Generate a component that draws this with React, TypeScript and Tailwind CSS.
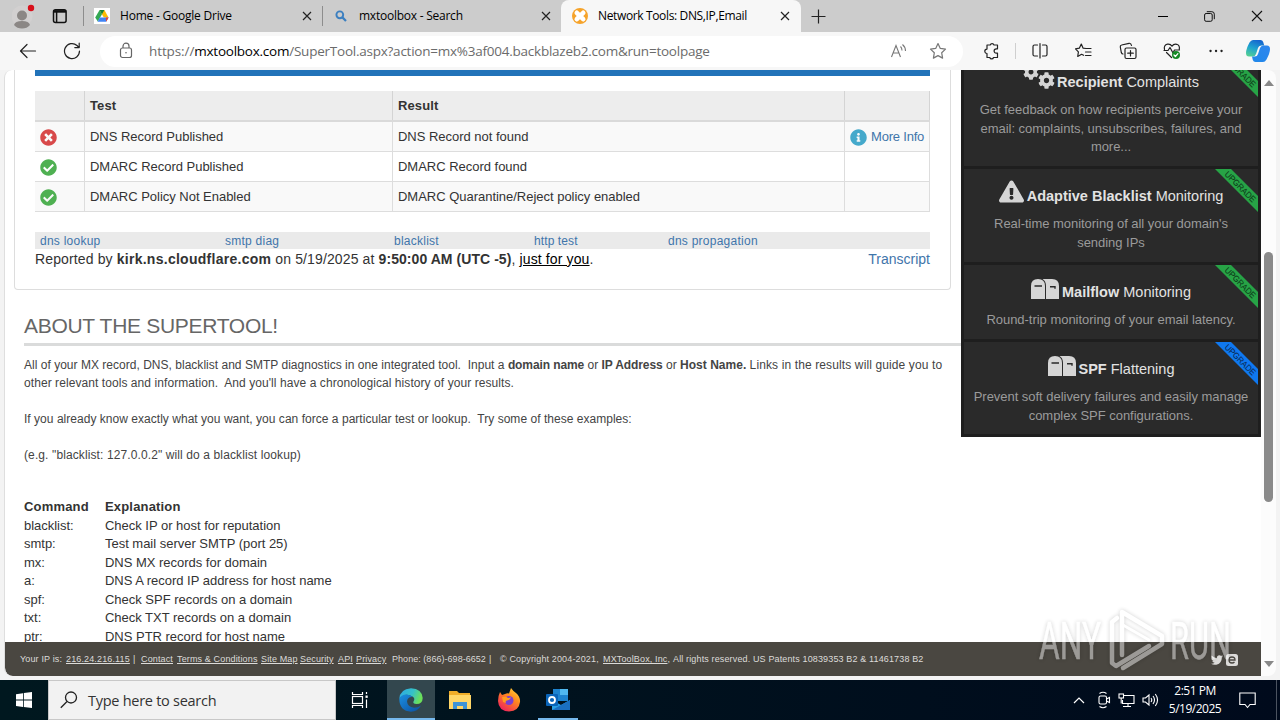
import type { ReactNode } from "react";
import { FaCheckCircle, FaCog, FaExclamationTriangle, FaInfoCircle, FaTimesCircle, FaTwitter } from "react-icons/fa";

const tests = [
  { ok: false, test: "DNS Record Published", result: "DNS Record not found", info: true },
  { ok: true, test: "DMARC Record Published", result: "DMARC Record found", info: false },
  { ok: true, test: "DMARC Policy Not Enabled", result: "DMARC Quarantine/Reject policy enabled", info: false },
];

const commands = [
  ["blacklist:", "Check IP or host for reputation"],
  ["smtp:", "Test mail server SMTP (port 25)"],
  ["mx:", "DNS MX records for domain"],
  ["a:", "DNS A record IP address for host name"],
  ["spf:", "Check SPF records on a domain"],
  ["txt:", "Check TXT records on a domain"],
  ["ptr:", "DNS PTR record for host name"],
];

function CloseX() {
  return (
    <svg width="10" height="10" viewBox="0 0 10 10" stroke="#222" strokeWidth="1.2">
      <path d="M1 1l8 8M9 1L1 9" />
    </svg>
  );
}

function TabBar() {
  return (
    <header className="flex h-8 shrink-0 items-center bg-[#cccccc] text-[12px] text-black">
      <div className="flex h-full w-[83px] items-center pl-3">
        <svg width="24" height="26" viewBox="0 0 24 26">
          <circle cx="10" cy="13" r="10.5" fill="#d2d0d0" />
          <circle cx="10" cy="12.500" r="5" fill="#8b8785" />
          <path d="M2 22q1-4 8-4t8 4q-3 3.500-8 3.500t-8-3.500z" fill="#8b8785" />
          <circle cx="19" cy="5" r="3.2" fill="#d80f1a" />
        </svg>
        <svg className="ml-4" width="16" height="16" viewBox="0 0 16 16" fill="none" stroke="#111" strokeWidth="1.5">
          <rect x="1.5" y="1.8" width="12.6" height="12.6" rx="2" />
          <path d="M1.5 3.4h12.6" strokeWidth="2.6" />
          <path d="M4.600 4v10" />
        </svg>
      </div>
      <div className="h-5 w-px bg-[#8d8d8d]" />
      <div className="flex h-full w-[238px] items-center pl-[10px]">
        <svg width="16" height="16" viewBox="0 0 16 16">
          <rect width="16" height="16" fill="#fff" />
          <path d="M5.6 2h4.8l4.1 7.4H9.8z" fill="#fbbc04" />
          <path d="M5.6 2L8 6.2 3.8 13.6 1.2 9.5z" fill="#34a853" />
          <path d="M5.8 9.5h8.8l-2.4 4.2H3.6z" fill="#4285f4" />
          <path d="M5.6 2h4.8L8 6.2z" fill="#188038" />
          <path d="M11.8 9.5h2.8l-2.4 4.2z" fill="#ea4335" />
        </svg>
        <span className="ml-[10px] w-[182px] tracking-[-0.22px]">Home - Google Drive</span>
        <CloseX />
      </div>
      <div className="h-5 w-px bg-[#8d8d8d]" />
      <div className="flex h-full w-[238px] items-center pl-3">
        <svg width="12" height="12" viewBox="0 0 12 12" fill="none" stroke="#3b7fc0" strokeWidth="1.9">
          <circle cx="4.8" cy="4.8" r="3.4" />
          <path d="M7.4 7.4l3.6 3.6" strokeWidth="2.2" />
        </svg>
        <span className="ml-3 w-[182px] tracking-[-0.24px]">mxtoolbox - Search</span>
        <CloseX />
      </div>
      <div className="flex h-full w-[240px] items-center rounded-t-lg bg-[#f7f7f7] pl-[11px]">
        <svg width="16" height="16" viewBox="0 0 16 16">
          <circle cx="8" cy="8" r="8" fill="#f6a32a" />
          <path d="M4.8 4.800l6.400 6.400M11.200 4.800l-6.400 6.400" stroke="#fff" strokeWidth="4.6" strokeLinecap="round" />
        </svg>
        <span className="ml-[10px] w-[182px] tracking-[-0.36px]">Network Tools: DNS,IP,Email</span>
        <CloseX />
      </div>
      <svg className="ml-[10px]" width="15" height="15" viewBox="0 0 15 15" stroke="#222" strokeWidth="1.2">
        <path d="M.5 7.5h14M7.5.5v14" />
      </svg>
      <div className="flex flex-1 items-center justify-end pr-[17px]">
        <div className="mr-[36px] h-px w-[10px] bg-black" />
        <svg className="mr-[36px]" width="11" height="11" viewBox="0 0 11 11" fill="none" stroke="#111">
          <rect x=".6" y="2.5" width="7.6" height="7.8" rx="1.5" />
          <path d="M2.8 .7h5q2.5 0 2.5 2.5v5" />
        </svg>
        <svg width="12" height="12" viewBox="0 0 12 12" stroke="#111" strokeWidth="1.1">
          <path d="M1 1l10 10M11 1L1 11" />
        </svg>
      </div>
    </header>
  );
}

function ToolIcon({ children, className = "" }: { children: ReactNode; className?: string }) {
  return (
    <svg
      className={className}
      width="18"
      height="18"
      viewBox="0 0 18 18"
      fill="none"
      stroke="#222"
      strokeWidth="1.2"
      strokeLinejoin="round"
      strokeLinecap="round"
    >
      {children}
    </svg>
  );
}

function Toolbar() {
  return (
    <div className="flex h-[38px] shrink-0 items-center bg-[#f7f7f7]">
      <ToolIcon className="ml-[19px]">
        <path d="M16.500 9H1.500M8 2.500L1.500 9 8 15.500" />
      </ToolIcon>
      <ToolIcon className="ml-[26px]">
        <path d="M16.500 9A7.500 7.500 0 1 1 14 3.500l2 2M16.200 1.200v4.400h-4.400" />
      </ToolIcon>
      <div className="ml-[19px] flex h-[31px] w-[863px] items-center rounded-full bg-white pl-[18px]">
        <svg width="16" height="18" viewBox="0 0 16 18" fill="none" stroke="#666" strokeWidth="1.200">
          <rect x="2.500" y="6" width="11" height="9.500" rx="2" />
          <path d="M5 6V4.200a3 3 0 0 1 6 0V6" />
          <circle cx="8" cy="10.800" r=".8" fill="#666" stroke="none" />
        </svg>
        <div className="ml-[15px] w-[741px] text-[13.5px] tracking-[-0.24px] text-[#6b6b6b]">
          <span className="tracking-[-0.1px]">https://</span>
          <span className="text-black">mxtoolbox.com</span>
          /SuperTool.aspx?action=mx%3af004.backblazeb2.com&amp;run=toolpage
        </div>
        <svg width="18" height="16" viewBox="0 0 18 16" fill="none" stroke="#777" strokeWidth="1.1">
          <path d="M1.500 14L6 2.500 10.500 14M3 10h6M10.500 3.500q1.500 1.500 1.500 4M12.500 1.500q3 2.500 3 6.500" />
        </svg>
        <ToolIcon className="ml-[21px]">
          <path d="M9 1.500l2.300 4.900 5.200.7-3.800 3.700.9 5.300L9 13.600l-4.600 2.500.9-5.300L1.500 7.100l5.200-.7z" stroke="#777" />
        </ToolIcon>
      </div>
      <ToolIcon className="ml-[20px]">
        <path d="M4 3h3.200a2 2 0 0 1 3.800 0h3.500v3.800h-1.200a2.200 2.200 0 0 0 0 4.400h1.200v4.300h-4a1.900 1.900 0 0 1-3.700 0H4v-4a2.200 2.200 0 1 1 0-4.400z" />
      </ToolIcon>
      <div className="ml-[14px] h-4 w-px bg-[#cfcfcf]" />
      <ToolIcon className="ml-[15px]">
        <path d="M6.500 3H3.500Q2 3 2 4.500v8Q2 14 3.500 14h3M11.500 3h3q1.500 0 1.500 1.500v8q0 1.500-1.500 1.500h-3M9 1.500v14.500" />
      </ToolIcon>
      <ToolIcon className="ml-[26px]">
        <path d="M11 6.500l-3-.4L6.300 2 4.300 6.200l-3.800.7 2.900 3-.7 4.600 3.900-2.200 2 1M10.500 6.500H16M10.500 10H16M10.500 13.500H16" />
      </ToolIcon>
      <ToolIcon className="ml-[26px]">
        <rect x="6" y="6" width="11" height="10.500" rx="1.500" />
        <path d="M11.500 8.500v5.500M8.700 11.200h5.600M4 12q-1.200 0-1.700-1.500L1.300 5Q1 3.300 2.600 3l7.500-1.700Q12 1 12.500 3.500" />
      </ToolIcon>
      <ToolIcon className="ml-[26px]">
        <path d="M1.500 7.500Q.5 3 4.500 2.200 7.500 1.800 9 4.200 10.700 1.700 13.700 2.300 17 3.300 16.300 7.500M1 8.500h4l2-3 3 5.500 1.500-3h5M3.500 10.500l5 5" />
        <circle cx="13" cy="13" r="4" fill="#158a26" stroke="none" />
        <path d="M11 13l1.400 1.500 2.500-2.800" stroke="#fff" />
      </ToolIcon>
      <ToolIcon className="ml-[26px]">
        <path d="M3.500 9h.1M9 9h.1M14.500 9h.1" strokeWidth="2.300" />
      </ToolIcon>
      <svg className="ml-[20px]" width="26" height="24" viewBox="0 0 26 24">
        <defs>
          <linearGradient id="cpA" x1="0.600" y1="0" x2="0.200" y2="1">
            <stop offset="0" stopColor="#1566cf" />
            <stop offset="0.500" stopColor="#1fa4cf" />
            <stop offset="1" stopColor="#55d092" />
          </linearGradient>
          <linearGradient id="cpB" x1="1" y1="0" x2="0.200" y2="1">
            <stop offset="0" stopColor="#2f86ee" />
            <stop offset="1" stopColor="#2188ea" />
          </linearGradient>
        </defs>
        <path d="M8 1h7.500q2 0 2.700 2l1 3.500h-3q-2.500 0-3.200 2.500l-2 6q-.8 2.500-3.500 2.500H4Q1 17.500 1 14q0-4 3.500-10.500Q6 1 8 1z" fill="url(#cpA)" />
        <path d="M18 23h-7.500q-2 0-2.700-2l-.8-3.500h2.800q2.500 0 3.200-2.500l2-6q.8-2.500 3.500-2.500H22q3 0 3 3.500 0 4-3.500 10.500Q20 23 18 23z" fill="url(#cpB)" />
      </svg>
    </div>
  );
}

function ResultsPanel() {
  return (
    <section className="ml-[9px] h-[220px] w-[937px] rounded-b border-x border-b border-[#dddddd] px-5">
      <div className="h-[6px] bg-[#2273b9]" />
      <div className="mt-[15px] text-[13px] tracking-[-0.02px] text-[#333]">
        <div className="flex h-[31px] border-b-2 border-[#dadada] bg-[#ededed] font-bold tracking-[0.1px]">
          <div className="w-[50px] border-r border-[#d4d4d4]" />
          <div className="flex w-[308px] items-center border-r border-[#d4d4d4] pl-[5px]">Test</div>
          <div className="flex w-[452px] items-center border-r border-[#d4d4d4] pl-[5px]">Result</div>
          <div className="w-[85px] border-r border-[#d4d4d4]" />
        </div>
        {tests.map((t) => (
          <div key={t.test} className="flex h-[30px] border-b border-[#dddddd] odd:bg-white even:bg-[#f9f9f9]">
            <div className="flex w-[50px] items-center border-r border-[#dddddd] pt-[2px] pl-[5px]">
              {t.ok ? <FaCheckCircle size={17} color="#4fb052" /> : <FaTimesCircle size={17} color="#d8494a" />}
            </div>
            <div className="flex w-[308px] items-center border-r border-[#dddddd] pl-[5px]">{t.test}</div>
            <div className="flex w-[452px] items-center border-r border-[#dddddd] pl-[5px]">{t.result}</div>
            <div className="flex w-[85px] items-center border-r border-[#dddddd] pl-[5px] tracking-[-0.2px] whitespace-nowrap text-[#3f75aa]">
              {t.info && (
                <>
                  <FaInfoCircle className="mt-[2px] mr-1" size={17} color="#45a9cb" />
                  More Info
                </>
              )}
            </div>
          </div>
        ))}
      </div>
      <nav className="mt-5 flex h-[17px] items-center bg-[#eaeaea] pl-[5px] text-[12px] tracking-[0.25px] text-[#3f75aa]">
        <a className="w-[185px]">dns lookup</a>
        <a className="w-[169px]">smtp diag</a>
        <a className="w-[140px]">blacklist</a>
        <a className="w-[134px] tracking-[0.1px]">http test</a>
        <a>dns propagation</a>
      </nav>
      <div className="flex h-5 items-center justify-between text-[14px] text-[#333]">
        <p className="tracking-[0.13px]">
          Reported by <b className="tracking-[0.27px]">kirk.ns.cloudflare.com</b> on 5/19/2025 at{" "}
          <b className="tracking-[0.06px]">9:50:00 AM (UTC -5)</b>, <u className="text-black">just for you</u>.
        </p>
        <a className="text-[#3f75aa]">Transcript</a>
      </div>
    </section>
  );
}

function About() {
  return (
    <section className="pl-[19px]">
      <div className="mt-[22px] flex h-[34px] items-center border-b-3 border-[#dadbdb] pb-1 text-[21px] tracking-[-0.3px] text-[#666]">
        ABOUT THE SUPERTOOL!
      </div>
      <div className="mt-[10px] text-[12px] leading-[18px] whitespace-pre text-[#444]">
        <p className="tracking-[0.02px]">
          All of your MX record, DNS, blacklist and SMTP diagnostics in one integrated tool.{"  "}Input a{" "}
          <b className="tracking-[-0.1px]">domain name</b> or <b className="tracking-[-0.1px]">IP Address</b> or{" "}
          <b>Host Name.</b> <span className="tracking-[0.12px]">Links in the results will guide you to</span>
        </p>
        <p className="tracking-[0.07px]">
          other relevant tools and information.{"  "}And you'll have a chronological history of your results.
        </p>
        <p className="mt-[18px] tracking-[0.03px]">
          If you already know exactly what you want, you can force a particular test or lookup.{"  "}Try some of these
          examples:
        </p>
        <p className="mt-[18px] tracking-[0.11px]">(e.g. "blacklist: 127.0.0.2" will do a blacklist lookup)</p>
      </div>
      <div className="mt-[34px] text-[13px] leading-[18.57px] tracking-[-0.02px] text-[#333]">
        <div className="flex font-bold tracking-[0.17px]">
          <span className="w-[81px]">Command</span>
          <span>Explanation</span>
        </div>
        {commands.map(([name, text]) => (
          <div key={name} className="flex">
            <span className="w-[81px]">{name}</span>
            <span>{text}</span>
          </div>
        ))}
      </div>
    </section>
  );
}

function Ribbon({ blue = false }: { blue?: boolean }) {
  return (
    <svg className="absolute top-0 right-0" width="43" height="43" viewBox="0 0 43 43">
      <path d="M0 0h16l27 27v16z" fill={blue ? "#0f78f0" : "#27a346"} />
      <text
        x="25"
        y="20.5"
        transform="rotate(45 25 18)"
        textAnchor="middle"
        fontSize="8.5"
        fill={blue ? "#0b2c58" : "#0d3d1a"}
        stroke={blue ? "#0b2c58" : "#0d3d1a"}
        strokeWidth=".1"
        textLength="40"
        lengthAdjust="spacingAndGlyphs"
      >
        UPGRADE
      </text>
    </svg>
  );
}

function Mailboxes() {
  return (
    <svg className="mb-[3px]" width="28" height="20" viewBox="0 0 28 20" fill="#d5d5d5">
      <path d="M0 20V7q0-7 7-7t7 7v13z" />
      <path d="M11.500 0H21q7 0 7 7v13H15V7q0-5-3.500-7z" />
      <path d="M3.500 7h7.500M19 7.800h5v2" fill="none" stroke="#2a2a2a" strokeWidth="1.400" />
    </svg>
  );
}

function Gears() {
  return (
    <span className="flex h-8 w-[31px] items-start">
      <FaCog className="mt-[4px] shrink-0" size={16} color="#d5d5d5" />
      <FaCog className="mt-[12px] -ml-px shrink-0" size={17} color="#d5d5d5" />
    </span>
  );
}

interface CardProps {
  icon: ReactNode;
  bold: string;
  rest: string;
  lines: string[];
  className: string;
  blue?: boolean;
}

function UpgradeCard({ icon, bold, rest, lines, className, blue }: CardProps) {
  return (
    <article className={`relative mx-[3px] overflow-hidden bg-[#2a2a2a] text-center ${className}`}>
      <Ribbon blue={blue} />
      <h3 className="flex h-[26px] items-end justify-center gap-[3px] text-[14.5px] leading-[20px] text-[#e2e2e2]">
        {icon}
        <span className="tracking-[0px]">
          <b>{bold}</b> {rest}
        </span>
      </h3>
      <div className="mt-[9px] text-[13px] leading-[18.57px] tracking-[-0.03px] text-[#9b9b9b]">
        {lines.map((line) => (
          <p key={line}>{line}</p>
        ))}
      </div>
    </article>
  );
}

function Sidebar() {
  return (
    <aside className="flex h-[367px] w-[300px] flex-col gap-[3px] bg-[#1e1e1e]">
      <div className="h-[96px] overflow-hidden">
        <UpgradeCard
          className="-mt-[16px] h-[112px] pt-[12px]"
          icon={<Gears />}
          bold="Recipient"
          rest="Complaints"
          lines={["Get feedback on how recipients perceive your", "email: complaints, unsubscribes, failures, and", "more..."]}
        />
      </div>
      <UpgradeCard
        className="h-[93px] pt-[11px]"
        icon={<FaExclamationTriangle className="mb-[2px]" size={25} color="#d5d5d5" />}
        bold="Adaptive Blacklist"
        rest="Monitoring"
        lines={["Real-time monitoring of all your domain's", "sending IPs"]}
      />
      <UpgradeCard
        className="h-[74px] pt-[11px]"
        icon={<Mailboxes />}
        bold="Mailflow"
        rest="Monitoring"
        lines={["Round-trip monitoring of your email latency."]}
      />
      <UpgradeCard
        blue
        className="h-[92px] pt-[11px]"
        icon={<Mailboxes />}
        bold="SPF"
        rest="Flattening"
        lines={["Prevent soft delivery failures and easily manage", "complex SPF configurations."]}
      />
    </aside>
  );
}

function Footer() {
  return (
    <footer className="absolute bottom-0 left-0 flex h-[34px] w-full items-center rounded-bl-lg bg-[#4a4741] pt-px pl-[15px] text-[9px] tracking-[0.14px] whitespace-nowrap text-[#dcdbd9]">
      <span className="w-[46px]">Your IP is:</span>
      <u className="w-[67px]">216.24.216.115</u>
      <span className="w-2">|</span>
      <u className="w-9">Contact</u>
      <u className="w-[84px]">Terms &amp; Conditions</u>
      <u className="w-[39px]">Site Map</u>
      <u className="w-[38px]">Security</u>
      <u className="w-[18px]">API</u>
      <u className="w-[36px]">Privacy</u>
      <span className="w-[97px] tracking-[0.04px]">Phone: (866)-698-6652</span>
      <span className="w-[11px]">|</span>
      <span className="w-[103px]">© Copyright 2004-2021,</span>
      <span className="w-[70px]">
        <u>MXToolBox, Inc</u>,
      </span>
      <span className="w-[538px]">All rights reserved. US Patents 10839353 B2 &amp; 11461738 B2</span>
      <FaTwitter size={12} />
      <svg className="ml-[3px]" width="12" height="12" viewBox="0 0 12 12">
        <rect width="12" height="12" rx="2.500" fill="#dcdbd9" />
        <path d="M3 6h6q0-3-3-3T3 6q0 3 3 3 1.500 0 2.500-1" fill="none" stroke="#4a4741" strokeWidth="1.300" />
      </svg>
    </footer>
  );
}

function Watermark() {
  return (
    <svg
      className="absolute top-[604px] left-[1034px] drop-shadow-[0_0_2px_rgba(0,0,0,0.4)]"
      width="204"
      height="72"
      viewBox="0 0 204 72"
      fill="#fff"
      stroke="#fff"
      opacity=".45"
      fontFamily="Roboto, sans-serif"
      fontSize="51"
    >
      <g strokeWidth=".5">
        <text x="5" y="55" textLength="62" lengthAdjust="spacingAndGlyphs">ANY</text>
        <text x="136" y="55" textLength="61" lengthAdjust="spacingAndGlyphs">RUN</text>
      </g>
      <g fill="none" strokeWidth="4.500" strokeLinejoin="round" strokeLinecap="round">
        <path d="M83 14l-5 4v41l4 3 33-20" />
        <path d="M88 51V8l40 24v8L89 64" />
        <path d="M89 21l26 15" strokeWidth="3" />
      </g>
    </svg>
  );
}

function BrowserPage() {
  return (
    <main className="flex h-[610px] shrink-0 bg-[#f3f3f3] pb-1 pl-1">
      <div className="relative flex h-full w-[1257px] overflow-hidden rounded-l-lg border-l border-[#dedede] bg-white">
        <div className="w-[956px]">
          <ResultsPanel />
          <About />
        </div>
        <Sidebar />
        <Footer />
      </div>
      <div className="flex w-[15px] flex-col items-center rounded-r-lg bg-[#fcfcfc]">
        <div className="mt-[10px] h-0 w-0 border-x-[5px] border-b-[6px] border-x-transparent border-b-[#888]" />
        <div className="mt-[166px] h-[250px] w-[9px] rounded-full bg-[#8a8a8a]" />
        <div className="mt-[159px] h-0 w-0 border-x-[5px] border-t-[6px] border-x-transparent border-t-[#888]" />
      </div>
    </main>
  );
}

function Taskbar() {
  return (
    <div className="flex h-10 shrink-0 items-stretch bg-gradient-to-r from-[#00181f] to-[#000a1c] text-white">
      <div className="flex w-12 items-center justify-center">
        <svg width="16" height="16" viewBox="0 0 16 16" fill="#fff">
          <path d="M0 2.200L7 1.200v6.400H0zM7.800 1.100L16 0v7.600H7.800zM0 8.400h7v6.500l-7-1zM7.800 8.400H16V16l-8.200-1.100z" />
        </svg>
      </div>
      <div className="flex w-72 items-center border border-[#c8c8c8] bg-[#f2f2f2] pl-[11px] text-[#333]">
        <svg width="18" height="18" viewBox="0 0 18 18" fill="none" stroke="#222" strokeWidth="1.300">
          <circle cx="11" cy="6.500" r="5.500" />
          <path d="M7 10.500L.8 16.800" />
        </svg>
        <span className="ml-[10px] pt-0.5 text-[14.5px] tracking-[-0.27px]">Type here to search</span>
      </div>
      <div className="flex w-[51px] items-center justify-center pr-[3px]">
        <svg width="18" height="18" viewBox="0 0 18 18" fill="none" stroke="#fff" strokeWidth="1.200">
          <path d="M1.500 1v2.500h10V1M1.500 17v-2.500h10V17M15.500 1v2M15.500 8.500V17" />
          <rect x="1.500" y="5.500" width="10" height="7" />
          <path d="M14.500 5.700h2.200" strokeWidth="2.400" />
        </svg>
      </div>
      <div className="flex w-12 items-center justify-center border-b-2 border-[#76b9ed] bg-[#33474e]">
        <svg className="mt-0.5" width="24" height="24" viewBox="0 0 24 24">
          <defs>
            <linearGradient id="edA" x1="0" y1="0" x2="1" y2="0.300">
              <stop offset="0" stopColor="#2da9e6" />
              <stop offset="0.600" stopColor="#35c1c8" />
              <stop offset="1" stopColor="#6be05a" />
            </linearGradient>
            <linearGradient id="edB" x1="0" y1="0" x2="1" y2="1">
              <stop offset="0" stopColor="#1b8fe0" />
              <stop offset="1" stopColor="#0b4fa0" />
            </linearGradient>
          </defs>
          <path d="M.3 11Q1 1 12 .3q11 .7 11.700 9.700Q23.500 16 17.500 16q-4-.3-3-2.500 2-3-1-5Q8 5.500 3.500 8 1 9.500.3 11z" fill="url(#edA)" />
          <path d="M.3 11Q2 6.500 7.500 6.500q4 0 6 2.500-5-.5-5.500 4.500.5 5.500 7 6.200 4 0 7-2.200Q18.500 23.700 12 23.700.5 23 .3 11z" fill="url(#edB)" />
        </svg>
      </div>
      <div className="flex w-[49px] items-center justify-center">
        <svg width="22" height="20" viewBox="0 0 22 20">
          <path d="M0 1h8l2 2h11v16H0z" fill="#f0ad28" />
          <path d="M0 5h22v14H0z" fill="#ffd667" />
          <path d="M4 19v-7h14v7h-4v-3H8v3z" fill="#3e93d6" />
        </svg>
      </div>
      <div className="flex w-[49px] items-center justify-center">
        <svg width="24" height="24" viewBox="0 0 24 24">
          <defs>
            <linearGradient id="ff" x1="1" y1="0" x2="0.300" y2="1">
              <stop offset="0" stopColor="#ffe23d" />
              <stop offset="0.450" stopColor="#ff8a1e" />
              <stop offset="1" stopColor="#f0255a" />
            </linearGradient>
          </defs>
          <path d="M3 4l2 3 3-1q2-1 4-.5L14 0q2 3 5 5 4.500 4 4 9-1 9-11 9.500Q1.500 23 1 13 1 8 3 4z" fill="url(#ff)" />
          <circle cx="12" cy="12.500" r="4.500" fill="#7a3fd0" />
          <path d="M5 9q4-1 6 1l3-.5q-1 2.500-4 3-2 .5-1 2.500l-3-1z" fill="#ff9a1f" />
        </svg>
      </div>
      <div className="flex w-[49px] flex-col items-center">
        <svg className="mt-2" width="26" height="24" viewBox="0 0 26 24">
          <path d="M8 1h15v12H8z" fill="#1d83cf" />
          <path d="M15 1h8v6h-8z" fill="#50b8f0" />
          <path d="M7 12l9 5 9-5v10H7z" fill="#2aa0e4" />
          <path d="M7 22L25 12v10z" fill="#1a6fc0" />
          <rect x="1" y="6" width="12" height="12" rx="1" fill="#0a64b8" />
          <circle cx="7" cy="12" r="3" fill="none" stroke="#fff" strokeWidth="1.800" />
        </svg>
        <div className="mt-1.5 h-0.5 w-10 bg-[#76b9ed]" />
      </div>
      <div className="flex flex-1 items-center justify-end">
        <svg width="12" height="7" viewBox="0 0 12 7" fill="none" stroke="#fff" strokeWidth="1.200">
          <path d="M1 6l5-5 5 5" />
        </svg>
        <svg className="ml-3" width="14" height="18" viewBox="0 0 14 18" fill="none" stroke="#fff" strokeWidth="1.100">
          <rect x="2" y="5" width="7.500" height="8" rx="1.500" />
          <path d="M9.500 8l3-1.500v5l-3-1.500M2.500 2.500q3.500-2.500 7 0M2.500 15.500q3.500 2.500 7 0" />
        </svg>
        <svg className="ml-[7px]" width="17" height="15" viewBox="0 0 17 15" fill="none" stroke="#fff" strokeWidth="1.100">
          <path d="M6 2.500h10v8H4.500V7M5 13.500h8M10 10.500v3" />
          <rect x="1" y="1" width="4.500" height="4" />
          <path d="M3.200 5v5.500" />
        </svg>
        <svg className="ml-[7px]" width="17" height="14" viewBox="0 0 17 14" fill="none" stroke="#fff" strokeWidth="1.100">
          <path d="M1 5h2.500L7 2v10L3.500 9H1zM9 5q1.500 2 0 4M11 3q3 4 0 8M13.300 1q4.500 6 0 12" />
        </svg>
        <div className="ml-[8px] w-[56px] text-center text-[12px] leading-[18px] tracking-[-0.5px] whitespace-nowrap">
          <p>2:51 PM</p>
          <p>5/19/2025</p>
        </div>
        <svg className="mr-[20px] ml-4" width="17" height="17" viewBox="0 0 17 17" fill="none" stroke="#fff" strokeWidth="1.100">
          <path d="M.8 1h15.400v11.500H11L8.500 15.500 6 12.500H.8z" />
        </svg>
        <div className="mr-[3px] h-full w-px bg-[#4b5360]" />
      </div>
    </div>
  );
}

export default function App() {
  return (
    <div className="relative flex h-[720px] w-[1280px] flex-col overflow-hidden bg-white font-['Open_Sans',sans-serif]">
      <TabBar />
      <Toolbar />
      <div className="font-['Liberation_Sans',Arial,sans-serif]">
        <BrowserPage />
      </div>
      <Taskbar />
      <Watermark />
    </div>
  );
}
